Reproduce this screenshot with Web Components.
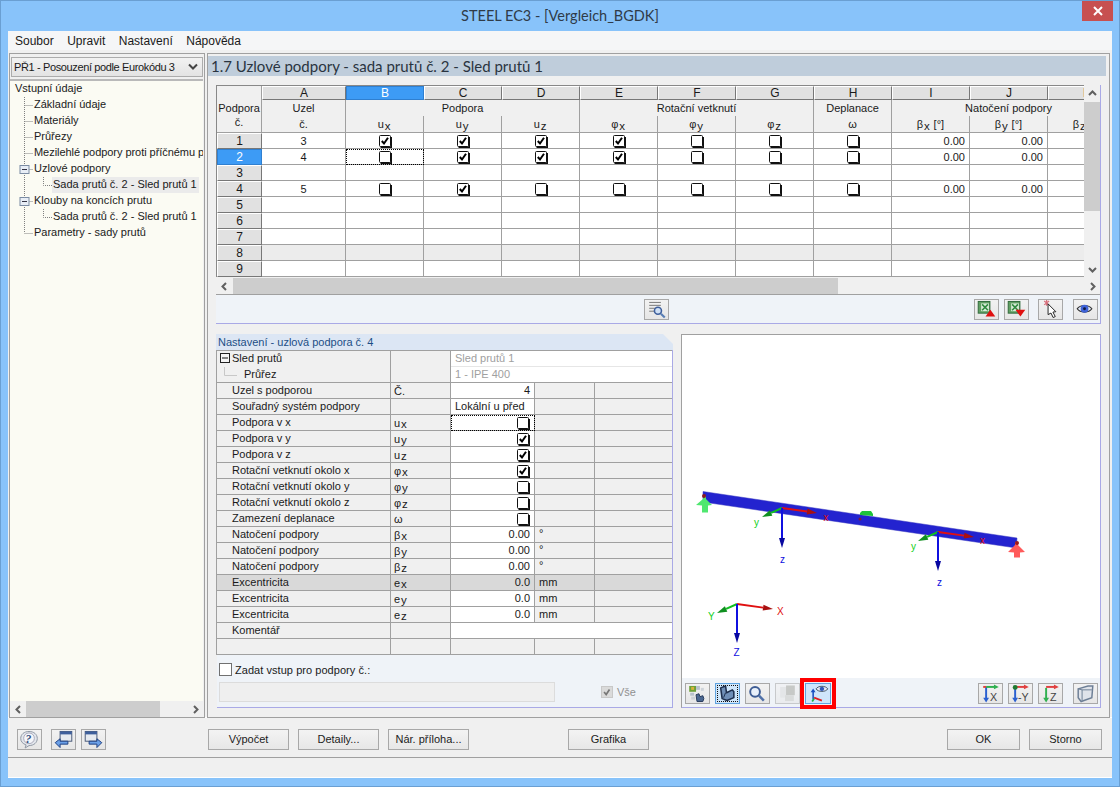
<!DOCTYPE html>
<html lang="cs"><head><meta charset="utf-8"><title>STEEL EC3</title>
<style>html,body{margin:0;padding:0;background:#88c3fa}</style></head>
<body>
<steel-window></steel-window>
<script>
const FONT='"Liberation Sans",Arial,sans-serif';
const LINE='#a0a0a0', EDGE='#a9a9e6';
const ICONS={
report:`<g stroke="#777" stroke-width="1"><path d="M3 2.5h12M3 5.5h12M3 8.5h7M3 11.5h6"/></g><circle cx="12" cy="11" r="3.6" fill="#cfe0f5" stroke="#3e5f9c" stroke-width="1.6"/><path d="M15 14l4 4" stroke="#5a7fb5" stroke-width="2.2"/>`,
xlsUp:`<rect x="2" y="1.5" width="12" height="12" fill="#5f9f62" stroke="#2f6a3c"/><rect x="5" y="3.500" width="8" height="8" fill="#d9ecd9"/><path d="M6 4.500l6 6M12 4.500l-6 6" stroke="#2f8a3f" stroke-width="1.600"/><path d="M14.500 10l5 7h-10z" fill="#e01010"/>`,
xlsDown:`<rect x="2" y="1.5" width="12" height="12" fill="#5f9f62" stroke="#2f6a3c"/><rect x="5" y="3.500" width="8" height="8" fill="#d9ecd9"/><path d="M6 4.500l6 6M12 4.500l-6 6" stroke="#2f8a3f" stroke-width="1.600"/><path d="M9.500 10h10l-5 7z" fill="#e01010"/>`,
cursor:`<path d="M4 1l5 4M9 1L4 5M6.500 0v6" stroke="#d8707c" stroke-width="1.300"/><path d="M8 4l8 8-3 .4 2.400 4.600-2.200 1-2.200-4.600L8 15z" fill="#fff" stroke="#222" stroke-width="1"/>`,
eye:`<path d="M2 9c3-4.500 12-4.500 15 0-3 4.500-12 4.500-15 0z" fill="#dfe6f4" stroke="#333" stroke-width="1.200"/><circle cx="9.500" cy="9" r="4" fill="#3f63d8"/><circle cx="9.500" cy="9" r="1.500" fill="#101a40"/>`,
mosaic:`<rect x="2" y="2" width="7" height="6" fill="#6ca03a"/><rect x="4" y="3" width="3" height="3" fill="#d9b23a"/><g fill="#b7c1cc"><rect x="9" y="2" width="4" height="4"/><rect x="14" y="4" width="3" height="3" opacity=".6"/><rect x="3" y="9" width="4" height="3"/><rect x="4" y="13" width="4" height="3" opacity=".6"/></g><path d="M9 11l3-1 1 3 3-1 1 3-1 3H10z" fill="#4a6791" stroke="#263a5c"/>`,
chair:`<path d="M3.500 4l5-2 1 7 6-3 1.500 2v6l-7 3-5-2z" fill="#6f8fb8" stroke="#1e2f4e" stroke-width="1.600" stroke-linejoin="round"/><path d="M8.500 9l-2 5" stroke="#1e2f4e"/>`,
zoom:`<circle cx="8" cy="8" r="5" fill="#e8f0fa" stroke="#3d5c94" stroke-width="2"/><path d="M12 12l5 5" stroke="#4f70a8" stroke-width="2.600"/>`,
layers:`<rect x="3" y="3" width="9" height="11" fill="#dcdcdc"/><rect x="9" y="1.500" width="9" height="10" fill="#a8a8a0"/><rect x="8" y="11.500" width="9" height="6" fill="#c8c8c4"/>`,
axisEye:`<path d="M5 16V7" stroke="#1a50c0" stroke-width="1.600"/><path d="M5 4.500l-2.500 4h5z" fill="#1a50c0"/><path d="M6 15l-2 3" stroke="#20b040" stroke-width="1.800"/><path d="M6 14l8 3" stroke="#e02020" stroke-width="1.800"/><path d="M8 5c2-3.500 10-3.500 12 0-2 3.500-10 3.500-12 0z" fill="#e6ebf4" stroke="#456"/><circle cx="14" cy="5" r="2.300" fill="#2f58b8"/>`,
axX:`<path d="M6 3v12" stroke="#2a5fd0" stroke-width="2"/><path d="M6 19l-3-5h6z" fill="#2a5fd0"/><path d="M6 3h9" stroke="#30b050" stroke-width="2"/><path d="M19 3l-5-2.500v5z" fill="#30b050"/><path d="M3 3h3" stroke="#e04040" stroke-width="2"/><text x="10" y="17" font-size="11" font-family="Liberation Sans" fill="#444">X</text>`,
axY:`<path d="M5 4v11" stroke="#2a5fd0" stroke-width="2"/><path d="M5 19l-3-5h6z" fill="#2a5fd0"/><path d="M5 3h10" stroke="#e04040" stroke-width="2"/><path d="M19 3l-5-2.500v5z" fill="#e04040"/><circle cx="5" cy="3.500" r="2.500" fill="#1f7a30"/><text x="8" y="17" font-size="11" font-family="Liberation Sans" fill="#444">-Y</text>`,
axZ:`<path d="M6 4v11" stroke="#30b050" stroke-width="2"/><path d="M6 19l-3-5h6z" fill="#30b050"/><path d="M6 3h9" stroke="#e04040" stroke-width="2"/><path d="M19 3l-5-2.500v5z" fill="#e04040"/><text x="10" y="17" font-size="11" font-family="Liberation Sans" fill="#444">Z</text>`,
cube:`<path d="M3 5l10-3h5l-1 12-11 4-3-4z" fill="#dfe3ea" stroke="#6d7f96" stroke-width="1.500"/><path d="M7 6h10M7 6v11M7 6L3 5" stroke="#6d7f96"/>`,
help:`<path d="M10 1.500c5 0 8.500 3 8.500 7.200S15 16 10 16l-4 2.500 1-3.200C3.500 14 1.500 12 1.500 8.700 1.500 4.500 5 1.500 10 1.500z" fill="#e2e6ec" stroke="#8f97a3"/><circle cx="10" cy="8.500" r="5.500" fill="#f4f6fa" stroke="#aab"/><text x="6.500" y="13" font-size="12" font-weight="bold" font-style="italic" font-family="Liberation Serif" fill="#35507f">?</text>`,
winBack:`<rect x="7" y="1.500" width="12" height="10" fill="#e6eaf0" stroke="#4a5a78"/><rect x="7" y="1.500" width="12" height="3" fill="#3e5f9c"/><path d="M2 13l5-4v2.500h8v3H7V18z" fill="#6aa0e8" stroke="#1f3f80"/>`,
winFwd:`<rect x="2" y="1.500" width="12" height="10" fill="#e6eaf0" stroke="#4a5a78"/><rect x="2" y="1.500" width="12" height="3" fill="#3e5f9c"/><path d="M19 13l-5-4v2.500H6v3h8V18z" fill="#6aa0e8" stroke="#1f3f80"/>`
};
function def(name,css,html,init){
  customElements.define(name,class extends HTMLElement{
    constructor(){super();const r=this.attachShadow({mode:'open'});
      r.innerHTML=`<style>${css}</style>`+(typeof html==='function'?html(this):html);}
    connectedCallback(){ if(init) init(this); }
  });
}
def('tool-btn',`:host{display:block;width:25px;height:21px;box-sizing:border-box;border:1px solid #a8a8a8;background:linear-gradient(#f2f2f2,#e6e6e6);position:relative}
:host([hot]){background:#cfe6fb;border-color:#5fa3e0}
:host([off]){opacity:.55}
:host([mark]){box-shadow:0 0 0 1px #eff3f8,0 0 0 5px #f00}
svg{display:block;margin:0 auto;width:21px;height:19px}
i{position:absolute;inset:1px;border:1px dotted #111}`,
 h=>`<svg viewBox="0 0 21 19.500">${ICONS[h.getAttribute('icon')]||''}</svg>${h.hasAttribute('dots')?'<i></i>':''}`);
def('push-btn',`:host{display:flex;align-items:center;justify-content:center;box-sizing:border-box;width:81px;height:21px;border:1px solid #a8a8a8;background:linear-gradient(#f3f3f3,#e7e7e7);font:11px ${FONT};color:#1c1c1c;padding-bottom:1px}`,`<slot></slot>`);
def('check-mark',`:host{display:block;width:14px;height:14px}svg{display:block}`,
 h=>`<svg width="14" height="14" viewBox="0 0 14 14"><rect x="1.500" y="1.500" width="11" height="11" rx="1" fill="#fff" stroke="#111"/><path d="M2.500 13.200h10.700V3" fill="none" stroke="#111" stroke-width="1.600"/>${h.hasAttribute('on')?'<path d="M3.800 7l2.200 2.500L10 3.800" fill="none" stroke="#000" stroke-width="2"/>':''}</svg>`);
def('scroll-bar',`:host{display:flex;background:#f0f0f0;box-sizing:border-box}
:host([v]){flex-direction:column;width:16px}
:host(:not([v])){height:16px}
.a{flex:none;display:flex;align-items:center;justify-content:center;width:16px;height:16px}
:host(:not([v])) .a{height:auto}
.t{flex:none;background:#cdcdcd}.f{flex:1}`,
 h=>{const v=h.hasAttribute('v'),s=+h.getAttribute('start'),l=+h.getAttribute('len');
  const ar=d=>`<svg width="9" height="9" viewBox="0 0 9 9"><path d="${d}" fill="none" stroke="#606060" stroke-width="2"/></svg>`;
  const st=v?`height:${s}px;flex:none`:`width:${s}px;flex:none`, th=v?`height:${l}px;width:16px`:`width:${l}px`;
  return `<div class="a">${ar(v?'M1 6l3.500-3.500L8 6':'M6 1L2.500 4.500 6 8')}</div><div style="${st}"></div><div class="t" style="${th}"></div><div class="f"></div><div class="a">${ar(v?'M1 3l3.500 3.500L8 3':'M3 1l3.500 3.500L3 8')}</div>`;});
def('title-bar',`:host{display:grid;grid-template-columns:1fr auto 1fr;height:30px;align-items:start}
.t{font:14.500px Lato,sans-serif;color:#2f3b48;padding-top:6px;grid-column:2;white-space:nowrap}
.x{grid-column:3;justify-self:end;margin-right:6px;width:31px;height:20px;background:#c75050;display:flex;align-items:center;justify-content:center}`,
`<div class="t"><slot></slot></div><div class="x"><svg width="12" height="10" viewBox="0 0 12 10"><path d="M2 1l8 8M10 1l-8 8" stroke="#fff" stroke-width="2"/></svg></div>`);
def('menu-bar',`:host{display:flex;height:19px;background:#f5f6f7;align-items:center;padding-left:7px;font:12px ${FONT};color:#1a1a1a}
span{margin-right:13.500px}`,`<span>Soubor</span><span>Upravit</span><span>Nastavení</span><span>Nápověda</span>`);
def('nav-tree',`:host{display:flex;flex-direction:column;box-sizing:border-box;width:196px;height:665px;border:1px solid ${LINE};font:11px ${FONT};color:#1a1a1a;background:#f0f0f0}
.combo{margin:3px 1px 0 1px;height:20px;box-sizing:border-box;border:1px solid #acacac;background:linear-gradient(#f2f2f2,#e3e3e3);display:flex;align-items:center;justify-content:space-between;padding:0 4px 0 2px;white-space:nowrap;letter-spacing:-.37px}
.tree{flex:1;margin:2px 1px 0 0;border-top:2px solid #b9b9b9;background:#fbfbf3;overflow:hidden;padding-top:0}
.r{display:flex;align-items:center;height:16px;white-space:nowrap;overflow:hidden}
.r svg{flex:none;display:block}
.r span{margin-bottom:2px}
.r span.sel{background:#ebebeb;width:146px;padding-left:1px;margin:0 0 0 -1px;height:16px;line-height:14px}
.long{letter-spacing:-.05px}
scroll-bar{margin-right:1px;border-top:0}`,
()=>{
 const dot='stroke="#808080" stroke-dasharray="1 1" fill="none"';
 const t1=(last,exp)=>`<svg width="24" height="16"><path d="M14.500 0V${last?8:16}M14.500 8.500H23" ${dot}/>${exp?'<rect x="10" y="4.500" width="9" height="8" fill="#e8eef6" stroke="#7b8ca3"/><path d="M12 8.500h5" stroke="#334"/>':''}</svg>`;
 const t2=()=>`<svg width="43" height="16"><path d="M14.500 0V16M33.500 0V8.500H42" ${dot}/></svg>`;
 const rows=[
  `<div class="r"><span style="margin-left:5px">Vstupní údaje</span></div>`,
  ...['Základní údaje','Materiály','Průřezy'].map(s=>`<div class="r">${t1()}<span>${s}</span></div>`),
  `<div class="r">${t1()}<span class="long">Mezilehlé podpory proti příčnému po</span></div>`,
  `<div class="r">${t1(0,1)}<span>Uzlové podpory</span></div>`,
  `<div class="r">${t2()}<span class="sel">Sada prutů č. 2 - Sled prutů 1</span></div>`,
  `<div class="r">${t1(0,1)}<span>Klouby na koncích prutu</span></div>`,
  `<div class="r">${t2()}<span>Sada prutů č. 2 - Sled prutů 1</span></div>`,
  `<div class="r">${t1(1)}<span>Parametry - sady prutů</span></div>`];
 return `<div class="combo"><span>PŘ1 - Posouzení podle Eurokódu 3</span><svg width="10" height="8" viewBox="0 0 10 8"><path d="M1 1.500l4 4 4-4" fill="none" stroke="#444" stroke-width="2"/></svg></div><div class="tree">${rows.join('')}</div><scroll-bar start="0" len="134"></scroll-bar>`;
});
const sym=(a,b)=>`<span class="sy">${a}<b>${b}</b></span>`;
const symCss=`.sy{letter-spacing:.8px}.sy b{font-weight:400;font-size:11.500px;position:relative;top:1.500px}`;
def('data-grid',`:host{display:block;width:868px;height:192px;box-sizing:border-box;overflow:hidden;border-top:1px solid #888;border-left:1px solid #888;background:#f0f0f0;font:11px ${FONT};color:#1a1a1a}
.g{display:grid;grid-template-columns:45px 84px repeat(10,78px);grid-template-rows:14px 16px 17px repeat(9,16px);width:947px}
.c{box-sizing:border-box;border-right:1px solid ${LINE};border-bottom:1px solid ${LINE};display:flex;align-items:center;justify-content:center;white-space:nowrap;overflow:hidden;background:#fff;position:relative}
.h{background:#f0f0f0}
.nb{border-bottom:0}
.L{background:#e1e1e1;border-top:1px solid #fff;border-left:1px solid #fff;border-right:1px solid #777;border-bottom:1px solid #777;font-size:12px;line-height:1}
.R{background:#e1e1e1;border:1px solid;border-color:#fff #777 #777 #fff;font-size:12px;margin:0}
.on{background:#3d9bf5;color:#fff;border-color:#2f7fd0}
.n{justify-content:flex-end;padding-right:4px;font-size:11px}
.gray{background:#ececec}
.focus{outline:1px dotted #000;outline-offset:-1px}
.corner{text-align:center;line-height:14px;align-items:flex-start;padding-top:15px}
.two{text-align:center;line-height:16px;align-items:flex-start}
${symCss}`,
()=>{
 let h='';
 const cell=(c,r,cs,rs,cl,x)=>`<div class="c ${cl}" style="grid-column:${c}/span ${cs};grid-row:${r}/span ${rs}">${x}</div>`;
 h+=cell(1,1,1,3,'h corner','<div>Podpora<br>č.</div>');
 'ABCDEFGHIJK'.split('').forEach((l,i)=>{h+=cell(i+2,1,1,1,'L'+(l=='B'?' on':''),l)});
 h+=cell(2,2,1,2,'h two','<div>Uzel<br>č.</div>');
 h+=cell(3,2,3,1,'h nb','Podpora');h+=cell(6,2,3,1,'h nb','Rotační vetknutí');
 h+=cell(9,2,1,1,'h nb','Deplanace');h+=cell(10,2,3,1,'h nb','Natočení podpory');
 [sym('u','x'),sym('u','y'),sym('u','z'),sym('φ','x'),sym('φ','y'),sym('φ','z'),'ω',sym('β','x')+'&nbsp;[°]',sym('β','y')+'&nbsp;[°]',sym('β','z')+'&nbsp;[°]'].forEach((s,i)=>{h+=cell(i+3,3,1,1,'h',s)});
 const data=[['3',[1,1,1,1,0,0,0]],['4',[0,1,1,1,0,0,0]],null,['5',[0,1,0,0,0,0,0]],null,null,null,null,null];
 data.forEach((d,i)=>{
  const r=i+4,g=i==7?' gray':'';
  h+=cell(1,r,1,1,'R'+(i==1?' on':''),String(i+1));
  h+=cell(2,r,1,1,g,d?d[0]:'');
  for(let k=0;k<7;k++) h+=cell(k+3,r,1,1,g+(i==1&&k==0?' focus':''),d?`<check-mark ${d[1][k]?'on':''}></check-mark>`:'');
  for(let k=0;k<2;k++) h+=cell(k+10,r,1,1,'n'+g,d?'0.00':'');
  h+=cell(12,r,1,1,g,'');
 });
 return `<div class="g">${h}</div>`;
});
def('props-grid',`:host{display:block;background:#f0f0f0;font:11px ${FONT};color:#1a1a1a;border-top:1px solid ${LINE};border-left:1px solid ${LINE}}
.g{display:grid;grid-template-columns:174px 60px 84px 60px 77px;grid-template-rows:repeat(19,16px)}
.c{box-sizing:border-box;border-right:1px solid ${LINE};border-bottom:1px solid ${LINE};display:flex;align-items:center;white-space:nowrap;overflow:hidden;height:16px;padding-bottom:2px}
.lab{padding-left:15px}.sm{padding-left:3px;padding-bottom:0}
.v{background:#fff;justify-content:flex-end;padding-right:4px}
.w{background:#fff}
.g0{color:#a0a0a0;padding-left:4px;border-bottom:1px solid #e6e6e6;border-right:0;background:#fff}
.ex{background:#d9d9d9!important}
.nb{border-bottom:0}
.focus{outline:1px dotted #000;outline-offset:-1px}
.u{padding-left:4px}
.chk{padding:0 4px 0 0;background:#fff;justify-content:flex-end}
.last{border-right:0}
${symCss}`,
()=>{
 const R=[['Uzel s podporou','Č.','<span>4</span>','v',''],['Souřadný systém podpory','','Lokální u před','w',''],
 ['Podpora v x',sym('u','x'),0,'c',''],['Podpora v y',sym('u','y'),1,'c',''],['Podpora v z',sym('u','z'),1,'c',''],
 ['Rotační vetknutí okolo x',sym('φ','x'),1,'c',''],['Rotační vetknutí okolo y',sym('φ','y'),0,'c',''],['Rotační vetknutí okolo z',sym('φ','z'),0,'c',''],
 ['Zamezení deplanace','ω',0,'c',''],['Natočení podpory',sym('β','x'),'0.00','v','°'],['Natočení podpory',sym('β','y'),'0.00','v','°'],['Natočení podpory',sym('β','z'),'0.00','v','°'],
 ['Excentricita',sym('e','x'),'0.0','x','mm'],['Excentricita',sym('e','y'),'0.0','v','mm'],['Excentricita',sym('e','z'),'0.0','v','mm']];
 let h=`<div class="c nb" style="padding-left:3px"><svg width="10" height="10" style="margin-right:2px;flex:none"><rect x=".5" y=".5" width="9" height="9" fill="#f4f4f4" stroke="#222"/><path d="M2 5h6" stroke="#111"/></svg>Sled prutů</div><div class="c nb"></div><div class="c g0" style="grid-column:3/span 3">Sled prutů 1</div>`;
 h+=`<div class="c" style="padding-left:7px"><svg width="20" height="14" style="flex:none"><path d="M.5 0v8.500H13" stroke="#c8c8c8" fill="none"/></svg>Průřez</div><div class="c"></div><div class="c g0" style="grid-column:3/span 3;border-bottom-color:${LINE}">1 - IPE 400</div>`;
 R.forEach((r,i)=>{
  const ex=r[3]=='x'?' ex':'';
  h+=`<div class="c lab${ex}">${r[0]}</div><div class="c sm${ex}">${r[1]}</div>`;
  if(r[3]=='c') h+=`<div class="c chk${i==2?' focus':''}"><check-mark ${r[2]?'on':''}></check-mark></div>`;
  else if(r[3]=='w') h+=`<div class="c" style="padding-left:4px;background:#fff">${r[2]}</div>`;
  else h+=`<div class="c v${ex}">${r[2]}</div>`;
  h+=`<div class="c u${ex}" style="${r[4]=='°'?'align-items:flex-start':''}">${r[4]}</div><div class="c last${ex}"></div>`;
 });
 h+=`<div class="c lab">Komentář</div><div class="c"></div><div class="c last w" style="grid-column:3/span 3"></div>`;
 h+=`<div class="c"></div><div class="c"></div><div class="c"></div><div class="c"></div><div class="c last"></div>`;
 return `<div class="g">${h}</div>`;
});
def('settings-panel',`:host{display:flex;flex-direction:column;box-sizing:border-box;width:457px;height:374px;font:11px ${FONT};color:#1a1a1a}
.tab{height:16px;background:#dce6f4;font-size:11px;color:#1c4f86;padding-left:2px;line-height:16px;clip-path:polygon(0 0,447px 0,457px 10px,457px 16px,0 16px);box-sizing:border-box}
.side{border-right:1px solid ${EDGE}}
.foot{flex:1;background:#eff3f8;border-bottom:1px solid ${EDGE};border-right:1px solid ${EDGE};display:grid;grid-template-columns:336px 1fr;grid-template-rows:13px 20px;row-gap:6px;padding:8px 0 0 2px;align-content:start;margin-left:1px;box-sizing:border-box}
.chk{grid-column:1/span 2;display:flex;align-items:center;gap:3px;height:13px;letter-spacing:.05px}
.box{width:13px;height:13px;box-sizing:border-box;border:1px solid #707070;background:#fff;flex:none}
.inp{border:1px solid #dcdcdc;background:#efefef;box-sizing:border-box}
.all{display:flex;align-items:center;gap:4px;margin-left:46px;color:#909090;font-size:11px}
.dis{width:12px;height:12px;background:#dadada;border:1px solid #c8c8c8;box-sizing:border-box;display:block}`,
`<div class="tab">Nastavení - uzlová podpora č. 4</div><div class="side"><props-grid></props-grid></div>
<div class="foot"><div class="chk"><span class="box"></span><span>Zadat vstup pro podpory č.:</span></div><div class="inp"></div><div class="all"><svg class="dis" viewBox="0 0 12 12"><path d="M2.500 6l2.500 3 4-6" fill="none" stroke="#777" stroke-width="2"/></svg><span>Vše</span></div></div>`);
const ar=(x1,y1,x2,y2,c,w=2)=>{const a=Math.atan2(y2-y1,x2-x1),L=10,W=3;const bx=x2-L*Math.cos(a),by=y2-L*Math.sin(a),nx=-Math.sin(a)*W,ny=Math.cos(a)*W;
 return `<path d="M${x1} ${y1}L${bx} ${by}" stroke="${c}" stroke-width="${w}"/><path d="M${x2} ${y2}L${bx+nx} ${by+ny}L${bx-nx} ${by-ny}Z" fill="${c==='#e01010'?'#a81010':c==='#10c020'?'#109020':'#0808a0'}"/>`;};
def('view-panel',`:host{display:flex;flex-direction:column;box-sizing:border-box;width:420px;height:374px;border-top:1px solid ${LINE};border-left:1px solid ${LINE};border-right:1px solid ${EDGE};border-bottom:1px solid ${EDGE};background:#fff}
svg{display:block;flex:none}
text{font:10px "Liberation Sans",sans-serif}
.bar{flex:1;background:#eff3f8;display:flex;padding:5px 2px 0 3px;gap:5px;box-sizing:border-box}
.sp{flex:1}`,
`<svg width="418" height="343" viewBox="682 335 418 343">
<path d="M703 491.500L1017 538L1016.500 548L703 502Z" fill="#2323cf" stroke="#3a3ac0" stroke-width=".5"/>
<path d="M860 513l2-2h9l2 3v2l-13-1z" fill="#1fc43a"/>
<path d="M696 505l7-6 1-3h2v3l6 6-4 .5v7h-6v-7z" fill="#4fe76f"/><circle cx="704" cy="496" r="2" fill="#8a1a20"/>
<path d="M1008 552l7-7 0-3h3v3l7 7-5 .5v5h-6v-5z" fill="#ff5a5a"/><circle cx="1017" cy="543" r="2" fill="#a01818"/>
<circle cx="860" cy="519" r="1.500" fill="#7a1a40"/>
${ar(782,508,762,517,'#10c020')}${ar(782,508,817,513,'#e01010')}${ar(782,508,782,548,'#1010e0')}
<text x="823.500" y="521" fill="#e01010">x</text><text x="754" y="526" fill="#10d020">y</text><text x="780" y="563" fill="#1010e0">z</text>
${ar(938,532,918,541,'#10c020')}${ar(938,532,974,537,'#e01010')}${ar(938,532,938,571,'#1010e0')}
<text x="980" y="544" fill="#e01010">x</text><text x="911" y="550" fill="#10d020">y</text><text x="937" y="586" fill="#1010e0">z</text>
${ar(737,604,717,613,'#10c020')}${ar(737,604,773,609,'#e01010')}${ar(737,604,737,643,'#1010e0')}
<text x="777" y="615" fill="#e01010">X</text><text x="708" y="620" fill="#10d020">Y</text><text x="733.500" y="656" fill="#1010e0">Z</text>
</svg>
<div class="bar"><tool-btn icon="mosaic"></tool-btn><tool-btn icon="chair" hot dots></tool-btn><tool-btn icon="zoom"></tool-btn><tool-btn icon="layers" off></tool-btn><tool-btn icon="axisEye" hot mark style="width:26px"></tool-btn><div class="sp"></div><tool-btn icon="axX"></tool-btn><tool-btn icon="axY"></tool-btn><tool-btn icon="axZ"></tool-btn><tool-btn icon="cube" style="margin-left:5px"></tool-btn></div>`);
def('table-block',`:host{display:block;width:885px;height:239px;box-sizing:border-box;border-right:1px solid ${EDGE};border-bottom:1px solid ${EDGE}}
.top{display:flex}.hs{margin-top:1px;border-bottom:1px solid ${LINE};height:17px;display:block;box-sizing:border-box}
.tb{background:#eff3f8;height:28px;display:grid;grid-template-columns:1fr auto 1fr;padding-top:4px;box-sizing:border-box;padding-right:2px}
.rt{display:flex;gap:5px;justify-content:flex-end}
.mid{grid-column:2;margin-left:-2px}`,
`<div class="top"><data-grid></data-grid><scroll-bar v start="1" len="109"></scroll-bar></div>
<div class="hs"><scroll-bar start="1" len="605"></scroll-bar></div>
<div class="tb"><tool-btn class="mid" icon="report"></tool-btn><div class="rt"><tool-btn icon="xlsUp"></tool-btn><tool-btn icon="xlsDown"></tool-btn><tool-btn icon="cursor" style="margin-left:4px"></tool-btn><tool-btn icon="eye" style="margin-left:5px"></tool-btn></div></div>`);
def('main-pane',`:host{display:block;box-sizing:border-box;width:903px;height:665px;border:1px solid ${LINE};background:#f0f0f0}
h1{margin:2px 3px 0 0;height:20px;background:#bfcddb;font:400 15px Lato,sans-serif;color:#2a3440;padding-left:3px;line-height:20px;white-space:nowrap}
.body{padding:9px 0 0 8px;display:flex;flex-direction:column;gap:10px}
.low{display:flex;gap:8px}`,
`<h1>1.7 Uzlové podpory - sada prutů č. 2 - Sled prutů 1</h1><div class="body"><table-block></table-block><div class="low"><settings-panel></settings-panel><view-panel></view-panel></div></div>`);
def('bottom-bar',`:host{display:flex;height:40px;box-sizing:border-box;border-bottom:1px solid ${LINE};padding:11px 10px 0 9px;gap:9px;background:#f0f0f0}
.s{flex:1}`,
`<tool-btn icon="help"></tool-btn><tool-btn icon="winBack"></tool-btn><tool-btn icon="winFwd" style="margin-left:-4px"></tool-btn><div style="width:84px"></div><push-btn>Výpočet</push-btn><push-btn>Detaily...</push-btn><push-btn>Nár. příloha...</push-btn><div style="width:81px"></div><push-btn>Grafika</push-btn><div class="s"></div><push-btn style="width:73px">OK</push-btn><push-btn style="width:73px">Storno</push-btn>`);
def('steel-window',`:host{display:flex;flex-direction:column;box-sizing:border-box;width:1120px;height:787px;border:1px solid #6a9fd2;background:#88c3fa}
.client{margin:0 7px 8px 7px;height:747px;background:#f0f0f0;display:flex;flex-direction:column}
.work{height:668px;display:flex;padding:3px 0 0 1px;gap:2px;box-sizing:border-box;background:#f0f0f0;border-bottom:1px solid #fff}
.status{height:19px;background:#f0f0f0;border-bottom:1px solid #fff}`,
`<title-bar>STEEL EC3 - [Vergleich_BGDK]</title-bar>
<div class="client"><menu-bar></menu-bar><div class="work"><nav-tree></nav-tree><main-pane></main-pane></div><bottom-bar></bottom-bar><div class="status"></div></div>`);
</script>
</body></html>
